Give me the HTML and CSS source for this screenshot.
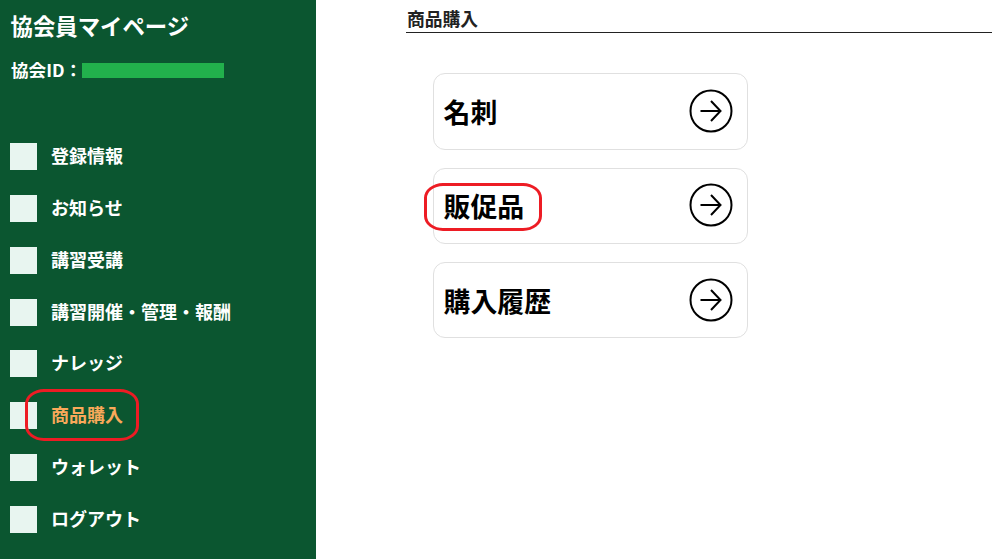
FILE: index.html
```html
<!DOCTYPE html>
<html lang="ja">
<head>
<meta charset="utf-8">
<title>商品購入</title>
<link rel="stylesheet" href="styles.css">
</head>
<body>
<div class="page">
  <aside class="sidebar">
    <h1 class="site-title">協会員マイページ</h1>
    <div class="member-id"><span>協会ID：</span><span class="id-mask"></span></div>
    <nav class="nav">
      <a class="nav-item"><span class="nav-icon"></span><span class="nav-label">登録情報</span></a>
      <a class="nav-item"><span class="nav-icon"></span><span class="nav-label">お知らせ</span></a>
      <a class="nav-item"><span class="nav-icon"></span><span class="nav-label">講習受講</span></a>
      <a class="nav-item"><span class="nav-icon"></span><span class="nav-label">講習開催・管理・報酬</span></a>
      <a class="nav-item"><span class="nav-icon"></span><span class="nav-label">ナレッジ</span></a>
      <a class="nav-item nav-item-active"><span class="nav-icon"></span><span class="nav-label">商品購入</span><span class="mark mark-nav"></span></a>
      <a class="nav-item"><span class="nav-icon"></span><span class="nav-label">ウォレット</span></a>
      <a class="nav-item"><span class="nav-icon"></span><span class="nav-label">ログアウト</span></a>
    </nav>
  </aside>
  <main class="content">
    <h2 class="heading">商品購入</h2>
    <div class="cards">
      <a class="card"><span class="card-label">名刺</span>
        <svg class="arrow" viewBox="0 0 44 44"><circle cx="22" cy="22" r="20.5"/><path d="M11.500 22H31.500M22 12L31.500 22L22 32"/></svg>
      </a>
      <a class="card"><span class="card-label">販促品</span>
        <svg class="arrow" viewBox="0 0 44 44"><circle cx="22" cy="22" r="20.5"/><path d="M11.500 22H31.500M22 12L31.500 22L22 32"/></svg>
        <span class="mark mark-card"></span>
      </a>
      <a class="card"><span class="card-label">購入履歴</span>
        <svg class="arrow" viewBox="0 0 44 44"><circle cx="22" cy="22" r="20.5"/><path d="M11.500 22H31.500M22 12L31.500 22L22 32"/></svg>
      </a>
    </div>
  </main>
</div>
</body>
</html>
```
FILE: styles.css
```css
* { box-sizing: border-box; }
html, body { margin: 0; height: 100%; overflow: hidden; }
body { font-family: "Noto Sans CJK JP", "Noto Sans", sans-serif; background: #fff; color: #000; }
.page { display: flex; height: 559px; }
.sidebar { width: 316px; flex: none; background: #0b5630; color: #fff; padding: 9px 0 0 10px; }
.site-title { margin: 0 0 0 0.500px; font-size: 22.400px; line-height: 32px; font-weight: 700; }
.member-id { display: flex; align-items: center; margin: 14px 0 0 1px; font-size: 17.600px; line-height: 30px; font-weight: 700; height: 30px; }
.id-mask { display: block; width: 142px; height: 15px; background: #22b14c; }
.nav { display: flex; flex-direction: column; gap: 24.850px; margin-top: 58px; }
.nav-item { position: relative; display: flex; align-items: center; gap: 14px; height: 27px; font-size: 18px; font-weight: 700; color: #fff; }
.nav-label { padding-bottom: 3px; }
.nav-icon { width: 27px; height: 27px; flex: none; background: #e8f5f0; }
.nav-item-active { color: #f9a95a; }
.mark { position: absolute; border: 3px solid #ed1c24; background: transparent; pointer-events: none; }
.mark-nav { left: 15px; top: -13px; width: 114px; height: 52px; border-radius: 19px / 15px; }
.content { flex: 1; padding: 0 0 0 90px; }
.heading { margin: 0; height: 33px; padding: 5px 0 0 1px; font-size: 17.800px; line-height: 26px; font-weight: 700; color: #222; border-bottom: 1px solid #222; }
.cards { display: flex; flex-direction: column; gap: 18px; margin: 40.300px 0 0 27px; width: 315px; }
.card { position: relative; display: flex; align-items: center; justify-content: space-between; height: 76.300px; padding: 0 14px 0 10px; background: #fff; border: 1px solid #e0e0e0; border-radius: 12px; font-size: 26.900px; font-weight: 700; color: #000; }
.card-label { margin-left: -0.500px; }
.arrow { width: 44px; height: 44px; flex: none; fill: none; stroke: #000; stroke-width: 2; margin-bottom: 1px; }
.mark-card { left: -10px; top: 14px; width: 118px; height: 48px; border-radius: 19px / 15px; }
```
